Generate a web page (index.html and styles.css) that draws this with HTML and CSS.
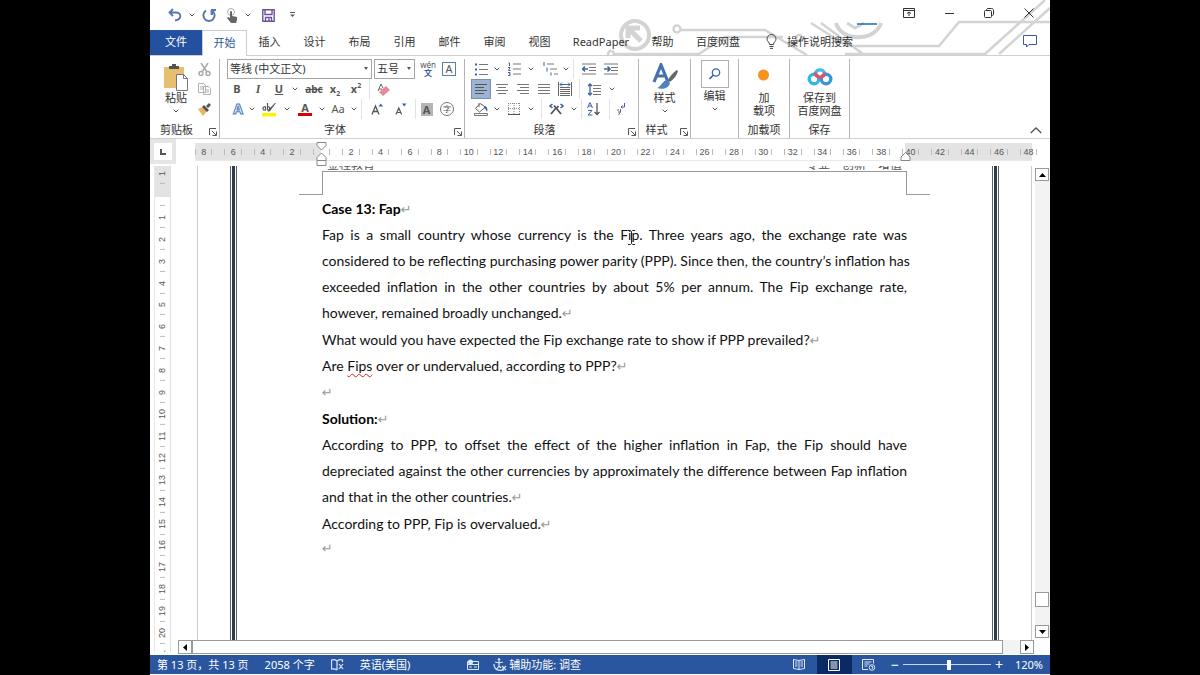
FILE: index.html
```
<!DOCTYPE html>
<html lang="zh-CN">
<head>
<meta charset="utf-8">
<title>Word</title>
<link rel="stylesheet" href="styles.css">
</head>
<body>
<svg class="defs" aria-hidden="true">
  <symbol id="chev" viewBox="0 0 6 4"><path d="M.7.7 3 3 5.300.7" fill="none" stroke="#555"/></symbol>
  <symbol id="launch" viewBox="0 0 8 8"><path d="M.5 7V.5H7M3 3l4 4M7.500 3.500v4h-4" fill="none" stroke="#555"/></symbol>
</svg>
<div class="app">
  <svg class="circuit" viewBox="0 0 450 56" fill="none" stroke="#d3d3d3" stroke-width="2.500" aria-hidden="true">
    <circle cx="35" cy="35" r="14" stroke-width="4"/>
    <path d="M41 41 30 30M28 38V28h12" stroke-width="5"/>
    <circle cx="77" cy="29" r="3.500"/>
    <path d="M81 30h84l30 18 12 7M165 37h18M108 48l-9 6H15M108 48l17-11h46M211 23l36 23h92l20-24h91M221 23l42 31h122l60-54M399 54 450 8M245 54h142"/>
    <circle cx="11" cy="54" r="3"/><circle cx="199" cy="38" r="3"/>
    <path d="M236 23c5 19 39 19 45 0" stroke-width="4"/>
    <path d="M247 23l8 5 9-5" stroke-width="3"/>
    <path d="M257 24h20" stroke="#1c6db0" stroke-width="1.500"/>
  </svg>
  <header class="titlebar">
    <div class="quick">
      <button class="tool w26" aria-label="撤消"><svg width="14" height="14" viewBox="0 0 14 14"><path d="M5 1 1.500 4.500 5 8M2 4.500h6c6 0 6 7-1 8" fill="none" stroke="#5674ae" stroke-width="1.800"/></svg></button>
      <button class="tool w8" aria-label="撤消选项"><svg width="6" height="4"><use href="#chev"/></svg></button>
      <button class="tool w26" aria-label="重复"><svg width="14" height="14" viewBox="0 0 14 14"><path d="M4 2.500C-1 6 2 13 7 13s8-7 3-10.500M10 7V2h4M9.500 6.500V2" fill="none" stroke="#5674ae" stroke-width="1.900"/></svg></button>
      <button class="tool w20" aria-label="触摸模式"><svg width="12" height="15" viewBox="0 0 12 15"><circle cx="5" cy="4" r="3.500" fill="none" stroke="#aaa"/><path d="M4 4c0-1.500 2-1.500 2 0v4l5 1v3l-1 3H5L1 10l1-1 2 1z" fill="#666"/></svg></button>
      <button class="tool w12" aria-label="触摸选项"><svg width="6" height="4"><use href="#chev"/></svg></button>
      <button class="tool w28" aria-label="保存"><svg width="13" height="13" viewBox="0 0 13 13"><path d="M.8.8h11.400v11.400H.8zM3 1v4.500h7V1M3.500 12V8.500h6V12M7 9.500V12" fill="none" stroke="#71509a" stroke-width="1.400"/></svg></button>
      <button class="tool w20" aria-label="自定义快速访问工具栏"><svg width="5" height="6" viewBox="0 0 5 6"><path d="M0 .5h5" stroke="#555"/><path d="M0 2.500h5L2.500 5z" fill="#555"/></svg></button>
    </div>
    <div class="winbtns">
      <button class="tool w40" aria-label="功能区显示选项"><svg width="12" height="10" viewBox="0 0 12 10"><path d="M.5.5h11v9H.5zM.5 2.500h11M6 8V4M4 5.500 6 4l2 1.500" fill="none" stroke="#333"/></svg></button>
      <button class="tool w40" aria-label="最小化"><svg width="9" height="9" viewBox="0 0 9 9"><path d="M0 4.500h9" stroke="#333"/></svg></button>
      <button class="tool w40" aria-label="还原"><svg width="10" height="10" viewBox="0 0 10 10"><rect x=".5" y="2.500" width="7" height="7" rx="1" fill="#fff" stroke="#333"/><path d="M2.500 2.500C2.500 1 3 .5 4 .5h3.500c1.500 0 2 1 2 2V6c0 1-.5 1.500-2 1.500" fill="none" stroke="#333"/></svg></button>
      <button class="tool w40" aria-label="关闭"><svg width="10" height="10" viewBox="0 0 10 10"><path d="M.5.5l9 9M9.500.5l-9 9" stroke="#333"/></svg></button>
    </div>
  </header>
  <nav class="tabs">
    <button class="file">文件</button>
    <button class="active">开始</button>
    <button>插入</button><button>设计</button><button>布局</button><button>引用</button><button>邮件</button><button>审阅</button><button>视图</button>
    <button class="wide">ReadPaper</button>
    <button>帮助</button>
    <button class="mid">百度网盘</button>
    <button class="tell"><svg width="11" height="15" viewBox="0 0 11 15"><path d="M3.500 10.500C3.500 8 1 7.500 1 5a4.500 4.500 0 0 1 9 0c0 2.500-2.500 3-2.500 5.500zM3.500 12.500h4M4 14.400h3" fill="none" stroke="#444"/></svg>操作说明搜索</button>
    <button class="comment" aria-label="批注"><svg width="14" height="13" viewBox="0 0 14 13"><path d="M.5.5h13v9H6L3.500 12V9.500h-3z" fill="#fff" stroke="#41569b"/></svg></button>
  </nav>

  <section class="ribbon">
    <div class="group clip">
      <div class="body clipbody">
        <button class="big"><svg width="26" height="28" viewBox="0 0 26 28"><path d="M1 4h20v21H1z" fill="#e8bf71"/><path d="M6 6V3h3V1h4v2h3v3z" fill="#555"/><path d="M13.500 11.500h7l4 4v12h-11z" fill="#fff" stroke="#777"/><path d="M20.500 11.500v4h4" fill="none" stroke="#777"/></svg>粘贴<svg class="under" width="6" height="4"><use href="#chev"/></svg></button>
        <div class="stack">
          <button class="tool" aria-label="剪切"><svg width="13" height="13" viewBox="0 0 13 13" fill="none" stroke="#a6a6a6" stroke-width="1.400"><path d="M3 0l6 9M10 0 4 9"/><circle cx="3" cy="10.500" r="2"/><circle cx="10" cy="10.500" r="2"/></svg></button>
          <button class="tool" aria-label="复制"><svg width="13" height="12" viewBox="0 0 13 12" fill="#fff" stroke="#b0b0b0"><path d="M.5.500h5l2 2v7h-7zM5.500 3.500h5l2 2v6h-7zM2 4h3M2 6h3M7 7h4M7 9h4"/></svg></button>
          <button class="tool" aria-label="格式刷"><svg width="14" height="13" viewBox="0 0 14 13"><path d="M1 6l5-2 4 4-4 5z" fill="#e9b565"/><path d="M5 4l2-2 5 5-2 2zM9 3l3-3 2 2-3 3z" fill="#555"/></svg></button>
        </div>
      </div>
      <div class="label">剪贴板<button aria-label="剪贴板设置"><svg width="8" height="8"><use href="#launch"/></svg></button></div>
    </div>

    <div class="group font">
      <div class="body">
        <div class="row">
          <span class="combo fontname"><select aria-label="字体"><option>等线 (中文正文)</option></select></span>
          <span class="combo fontsize"><select aria-label="字号"><option>五号</option></select></span>
          <button class="tool w26 pinyin" aria-label="拼音指南"><small>wén</small><b>文</b></button>
          <button class="tool w16" aria-label="字符边框"><span class="boxed">A</span></button>
        </div>
        <div class="row">
          <button class="tool w20"><b>B</b></button><button class="tool w22"><b><i class="serif">I</i></b></button><button class="tool w20"><b><u>U</u></b></button>
          <button class="tool w12" aria-label="下划线选项"><svg width="6" height="4"><use href="#chev"/></svg></button>
          <button class="tool w26"><b><s class="abc">abc</s></b></button><button class="tool w16"><b>x<sub>2</sub></b></button><button class="tool w26"><b>x<sup>2</sup></b></button>
          <button class="tool w28 split" aria-label="清除格式"><svg width="13" height="13" viewBox="0 0 13 13"><path d="M1 8 4 1l2 4M2 6h3" fill="none" stroke="#666"/><path d="M2 9l7-6 4 4-7 6z" fill="#e58a9b"/></svg></button>
        </div>
        <div class="row">
          <button class="tool w22"><b class="effect">A</b></button><button class="tool w6" aria-label="文本效果选项"><svg width="6" height="4"><use href="#chev"/></svg></button>
          <button class="tool w28" aria-label="突出显示"><svg width="15" height="15" viewBox="0 0 15 15"><path d="M0 11h14v3.500H0z" fill="#fff200"/><path d="M14 1 8 9l-2 1 1-3 6-6z" fill="#555"/><path d="M3.500 4.500v4M3.500 5c-3-1.500-3.500 3.500-.5 3M5.500 1v7.500M5.500 5c3-1.500 3 4 0 3" fill="none" stroke="#555" stroke-width="1.200"/></svg></button><button class="tool w8" aria-label="突出显示选项"><svg width="6" height="4"><use href="#chev"/></svg></button>
          <button class="tool w28"><b class="redbar">A</b></button><button class="tool w6" aria-label="字体颜色选项"><svg width="6" height="4"><use href="#chev"/></svg></button>
          <button class="tool w26">Aa</button><button class="tool w6" aria-label="大小写选项"><svg width="6" height="4"><use href="#chev"/></svg></button>
          <button class="tool w34 line" aria-label="增大字号"><svg width="12" height="12" viewBox="0 0 12 12"><path d="M1 11.500 4.500 3 8 11.500M2.500 8.500h4" fill="none" stroke="#555" stroke-width="1.300"/><path d="M7.500 3.500h4.500L9.700.5z" fill="#3c61a8"/></svg></button><button class="tool w20" aria-label="减小字号"><svg width="12" height="12" viewBox="0 0 12 12"><path d="M1 11.500 3.800 5l2.800 6.500M2.500 9.500h3" fill="none" stroke="#555" stroke-width="1.200"/><path d="M7 .5h4.500L9.200 3.500z" fill="#3c61a8"/></svg></button>
          <button class="tool w26 line" aria-label="字符底纹"><b class="shade">A</b></button><button class="tool w20" aria-label="带圈字符"><span class="ring">字</span></button>
        </div>
      </div>
      <div class="label">字体<button aria-label="字体设置"><svg width="8" height="8"><use href="#launch"/></svg></button></div>
    </div>

    <div class="group para">
      <div class="body">
        <div class="row">
          <button class="tool w20" aria-label="项目符号"><svg width="13" height="13" viewBox="0 0 13 13"><path d="M4 1.500h9M4 6.500h9M4 11.500h9" stroke="#777"/><path d="M0 1.500h2M0 6.500h2M0 11.500h2" stroke="#3c61a8" stroke-width="2"/></svg></button><button class="tool w12" aria-label="项目符号选项"><svg width="6" height="4"><use href="#chev"/></svg></button>
          <button class="tool w22" aria-label="编号"><svg width="13" height="14" viewBox="0 0 13 14"><path d="M5 2h8M5 7h8M5 12h8" stroke="#777"/><path d="M.5 1h1v3M0 5.500h2L.5 8.500h2M0 10.500h2v3H0M1 12h1" fill="none" stroke="#3c61a8"/></svg></button><button class="tool w12" aria-label="编号选项"><svg width="6" height="4"><use href="#chev"/></svg></button>
          <button class="tool w26" aria-label="多级列表"><svg width="15" height="14" viewBox="0 0 15 14"><path d="M4 2h7M7 7h7M11 12h4" stroke="#777"/><path d="M1 0v4M4 5.500v4M8 10.500v3" stroke="#3c61a8"/></svg></button><button class="tool w6" aria-label="多级列表选项"><svg width="6" height="4"><use href="#chev"/></svg></button>
          <button class="tool w34 line" aria-label="减少缩进"><svg width="14" height="12" viewBox="0 0 14 12"><path d="M0 1h14M7 4.500h7M7 7.500h7M0 11h14" stroke="#777"/><path d="M6 6H1M3 3.500.5 6 3 8.500" fill="none" stroke="#3c61a8" stroke-width="1.500"/></svg></button>
          <button class="tool w16" aria-label="增加缩进"><svg width="14" height="12" viewBox="0 0 14 12"><path d="M0 1h14M7 4.500h7M7 7.500h7M0 11h14" stroke="#777"/><path d="M0 6h5M3.500 3.500 6 6 3.500 8.500" fill="none" stroke="#3c61a8" stroke-width="1.500"/></svg></button>
        </div>
        <div class="row">
          <button class="tool w20 on" aria-label="左对齐"><svg width="12" height="12" viewBox="0 0 12 12" stroke="#555"><path d="M0 1.500h12M0 4.500h9M0 7.500h12M0 10.500h9"/></svg></button>
          <button class="tool w22" aria-label="居中"><svg width="12" height="12" viewBox="0 0 12 12" stroke="#777"><path d="M0 1.500h12M2 4.500h8M0 7.500h12M2 10.500h8"/></svg></button>
          <button class="tool w20" aria-label="右对齐"><svg width="12" height="12" viewBox="0 0 12 12" stroke="#777"><path d="M0 1.500h12M3 4.500h9M0 7.500h12M3 10.500h9"/></svg></button>
          <button class="tool w22" aria-label="两端对齐"><svg width="12" height="12" viewBox="0 0 12 12" stroke="#777"><path d="M0 1.500h12M0 4.500h12M0 7.500h12M0 10.500h12"/></svg></button>
          <button class="tool w20" aria-label="分散对齐"><svg width="14" height="14" viewBox="0 0 14 14"><path d="M.5 0v14M13.500 0v14M2 5.500h10M2 7.500h10M2 9.500h10M2 11.500h10M2 13.500h10" stroke="#666"/><path d="M2 2.500h10M4 .5 2 2.500l2 2M10 .5l2 2-2 2" fill="none" stroke="#3c61a8"/></svg></button>
          <button class="tool w34 line" aria-label="行距"><svg width="13" height="13" viewBox="0 0 13 13"><path d="M5 2.500h8M5 5.500h8M5 8.500h8M5 11.500h8" stroke="#777"/><path d="M2 1v11M0 3l2-2 2 2M0 10l2 2 2-2" fill="none" stroke="#3c61a8" stroke-width="1.300"/></svg></button><button class="tool w6" aria-label="行距选项"><svg width="6" height="4"><use href="#chev"/></svg></button>
        </div>
        <div class="row">
          <button class="tool w20" aria-label="底纹"><svg width="15" height="14" viewBox="0 0 15 14"><path d="M6 1.500 1.500 6.500l4 3.500 6-5zM5 5V1" fill="#fff" stroke="#666"/><path d="M10 4c3 0 4 3 3 6-1-2-1-3-3-4z" fill="#3c61a8"/><path d="M.5 11.500h13v2H.5z" fill="#fff" stroke="#777"/></svg></button><button class="tool w12" aria-label="底纹选项"><svg width="6" height="4"><use href="#chev"/></svg></button>
          <button class="tool w22" aria-label="边框"><svg width="12" height="12" viewBox="0 0 12 12"><path d="M.5 0v11M6 0v11M11.500 0v11M0 .5h12M0 5.500h12" stroke="#888" stroke-dasharray="1 1"/><path d="M0 11.500h12" stroke="#555"/></svg></button><button class="tool w12" aria-label="边框选项"><svg width="6" height="4"><use href="#chev"/></svg></button>
          <button class="tool w34 line" aria-label="中文版式"><svg width="15" height="12" viewBox="0 0 15 12"><path d="M2 11 7 5M5 2.500 12 11M9.500 3 7 6" fill="none" stroke="#555" stroke-width="1.800"/><path d="M3.500 1 1 3l2.500 2M11.500 1 14 3l-2.500 2" fill="none" stroke="#3c61a8" stroke-width="1.600"/></svg></button><button class="tool w6" aria-label="中文版式选项"><svg width="6" height="4"><use href="#chev"/></svg></button>
          <button class="tool w28 line" aria-label="排序"><svg width="13" height="14" viewBox="0 0 13 14" fill="none"><path d="M.5 6 3 .5 5.500 6M1.500 4h3M1 8.500h4L1 13h4.500" stroke="#3c61a8"/><path d="M10 1v11M7.500 10l2.500 2.500 2.500-2.500" stroke="#555" stroke-width="1.300"/></svg></button>
          <button class="tool w26 line" aria-label="显示编辑标记"><svg width="9" height="13" viewBox="0 0 9 13"><path d="M7.500 0v4H4M5.500 2.500 4 4l1.500 1.500" fill="none" stroke="#3c61a8"/><path d="M3.500 6v3l-2 3M2 7H0M3 9 1 9" fill="none" stroke="#666"/></svg></button>
        </div>
      </div>
      <div class="label">段落<button aria-label="段落设置"><svg width="8" height="8"><use href="#launch"/></svg></button></div>
    </div>

    <div class="group styles">
      <div class="body"><button class="big"><svg width="26" height="28" viewBox="0 0 26 28"><path d="M2 19 9 2l7 17M5 13h8" fill="none" stroke="#4472b0" stroke-width="3.200"/><path d="M25 7c-3 2-7 6-9 10l2 2c4-3 7-7 8-11z" fill="#666"/><path d="M15 17l3 3c-1 5-7 7-13 5 4-1 5-7 10-8z" fill="#4e82bd"/></svg>样式<svg class="under" width="6" height="4"><use href="#chev"/></svg></button></div>
      <div class="label">样式<button aria-label="样式设置"><svg width="8" height="8"><use href="#launch"/></svg></button></div>
    </div>
    <div class="group edit">
      <div class="body"><button class="big"><span class="find"><svg width="12" height="12" viewBox="0 0 12 12"><circle cx="7" cy="4.500" r="3.700" fill="none" stroke="#3c61a8" stroke-width="1.300"/><path d="M4.500 7 .5 11" stroke="#3c61a8" stroke-width="1.600"/></svg></span>编辑<svg class="under" width="6" height="4"><use href="#chev"/></svg></button></div>
      <div class="label"></div>
    </div>
    <div class="group addin">
      <div class="body"><button class="big"><svg width="26" height="28" viewBox="0 0 26 28"><circle cx="12.500" cy="12" r="5.500" fill="#f7921e"/></svg>加<br>载项</button></div>
      <div class="label">加载项</div>
    </div>
    <div class="group save">
      <div class="body"><button class="big"><svg width="26" height="28" viewBox="0 0 26 28" fill="none" stroke-width="3.400"><path d="M8.500 10a4.800 4.800 0 0 1 9 0" stroke="#48bfe1"/><circle cx="7" cy="16" r="4.800" stroke="#35b5e8"/><circle cx="19" cy="16" r="4.800" stroke="#3299dc"/><path d="M17.700 9.500a4.600 4.600 0 0 1-9.400 0" stroke="#e25268"/></svg>保存到<br>百度网盘</button></div>
      <div class="label">保存</div>
    </div>
    <button class="collapse" aria-label="折叠功能区"><svg width="12" height="7" viewBox="0 0 12 7"><path d="M.7 6 6 1l5.300 5" fill="none" stroke="#555" stroke-width="1.300"/></svg></button>
  </section>

  <div class="rulerbar">
    <button class="corner" aria-label="制表符"><svg width="7" height="6" viewBox="0 0 7 6"><path d="M1 0v5h5" fill="none" stroke="#555" stroke-width="2"/></svg></button>
    <div class="hruler">
      <div class="hscale">
        <i>8</i><i>6</i><i>4</i><i>2</i><i></i><i>2</i><i>4</i><i>6</i><i>8</i><i>10</i><i>12</i><i>14</i><i>16</i><i>18</i><i>20</i><i>22</i><i>24</i><i>26</i><i>28</i><i>30</i><i>32</i><i>34</i><i>36</i><i>38</i><i>40</i><i>42</i><i>44</i><i>46</i><i>48</i>
      </div>
      <svg class="indent" width="11" height="24" viewBox="0 0 11 24"><path d="M1 .5h9v3L5.500 8 1 3.500zM5.500 11 10 15.500v3H1v-3zM1 18.500h9v5H1z" fill="#fff" stroke="#888"/></svg>
      <svg class="rindent" width="11" height="9" viewBox="0 0 11 9"><path d="M5.500.5 10 5v3.500H1V5z" fill="#fff" stroke="#888"/></svg>
    </div>
  </div>

  <main class="work">
    <div class="vruler"><div class="vscale">
      <i>1</i><i></i><i>1</i><i>2</i><i>3</i><i>4</i><i>5</i><i>6</i><i>7</i><i>8</i><i>9</i><i>10</i><i>11</i><i>12</i><i>13</i><i>14</i><i>15</i><i>16</i><i>17</i><i>18</i><i>19</i><i>20</i><i>21</i>
    </div></div>
    <div class="pane">
      <div class="view">
        <div class="page">
          <div class="rule"></div>
          <article class="sheet">
            <div class="head"><span>金程教育</span><span>专业·创新·增值</span></div>
            <div class="marks"></div>
            <h2>Case 13: Fap<em>↵</em></h2>
            <p class="long"><span>Fap is a small country whose currency is the Fip. Three years ago, the exchange rate was</span> <span>considered to be reflecting purchasing power parity (PPP). Since then, the country’s inflation has</span> <span>exceeded inflation in the other countries by about 5% per annum. The Fip exchange rate,</span> however, remained broadly unchanged.<em>↵</em></p>
            <p>What would you have expected the Fip exchange rate to show if PPP prevailed?<em>↵</em></p>
            <p>Are <u class="typo">Fips</u> over or undervalued, according to PPP?<em>↵</em></p>
            <p><em>↵</em></p>
            <h2>Solution:<em>↵</em></h2>
            <p class="long"><span>According to PPP, to offset the effect of the higher inflation in Fap, the Fip should have</span> <span>depreciated against the other currencies by approximately the difference between Fap inflation</span> and that in the other countries.<em>↵</em></p>
            <p>According to PPP, Fip is overvalued.<em>↵</em></p>
            <p class="last"><em>↵</em></p>
            <svg class="ibeam" width="7" height="15" viewBox="0 0 7 15"><path d="M0 .5h2.500l1 1 1-1H7M3.500 1.500v12M0 14.500h2.500l1-1 1 1H7" fill="none" stroke="#222"/></svg>
          </article>
          <div class="rule"></div>
        </div>
        <div class="vbar">
          <button aria-label="向上滚动"><svg width="7" height="4" viewBox="0 0 7 4"><path d="M0 4h7L3.500 0z"/></svg></button>
          <div class="track"><div class="thumb"></div></div>
          <button aria-label="向下滚动"><svg width="7" height="4" viewBox="0 0 7 4"><path d="M0 0h7L3.500 4z"/></svg></button>
        </div>
      </div>
      <div class="hbar">
        <button aria-label="向左滚动"><svg width="4" height="7" viewBox="0 0 4 7"><path d="M4 0v7L0 3.500z"/></svg></button>
        <div class="hthumb"></div>
        <button aria-label="向右滚动"><svg width="4" height="7" viewBox="0 0 4 7"><path d="M0 0v7l4-3.500z"/></svg></button>
      </div>
    </div>
  </main>

  <footer class="status">
    <span>第 13 页，共 13 页</span>
    <span>2058 个字</span>
    <svg width="13" height="12" viewBox="0 0 13 12"><path d="M6 1.500v9.500M6 2C4 .5 2 .5.500 1v9c2-.5 4 0 5.500 1M6 2c2-1.500 4-1.500 5.500-1v2M8 5l4 5M12 5l-4 5" fill="none" stroke="#dfe8f7" stroke-width="1.200"/></svg>
    <span>英语(美国)</span>
    <svg class="rec" width="12" height="11" viewBox="0 0 12 11"><path d="M.5 10.500v-8h11v8zM.5 5.500h11M2 8h3M7 8h3" fill="none" stroke="#dfe8f7"/><circle cx="3.500" cy="3" r="2.500" fill="#dfe8f7"/></svg>
    <span class="access"><svg width="14" height="13" viewBox="0 0 14 13"><path d="M6 3v6M2 4l4 1 4-1M6 8l-3 4M6 8l2 2M11 12C6 13 1 12 1 6M9 8l4 4M13 8l-4 4" fill="none" stroke="#dfe8f7" stroke-width="1.200"/><circle cx="6" cy="1.500" r="1.300" fill="#dfe8f7"/></svg>辅助功能: 调查</span>
    <span class="grow"></span>
    <button class="vw" aria-label="阅读视图"><svg width="12" height="11" viewBox="0 0 12 11"><path d="M6 1.500v9M6 1.500 .5.500v9l5.500 1 5.500-1v-9zM2 3h2.500M2 5h2.500M2 7h2.500M7.500 3H10M7.500 5H10M7.500 7H10" fill="none" stroke="#dfe8f7"/></svg></button>
    <button class="vw cur" aria-label="页面视图"><svg width="12" height="12" viewBox="0 0 12 12"><path d="M.5.5h11v11H.5zM2.500 3h7M2.500 5h7M2.500 7h7M2.500 9h7" fill="none" stroke="#fff"/></svg></button>
    <button class="vw" aria-label="Web 版式"><svg width="14" height="12" viewBox="0 0 14 12"><path d="M6 10.500H.5V.5h11v4M2.500 3h7M2.500 5h5M2.500 7h3" fill="none" stroke="#dfe8f7"/><circle cx="10" cy="8.500" r="2.800" fill="#2b579a" stroke="#dfe8f7"/><path d="M9 7l2 1-1 2" stroke="#dfe8f7" fill="none"/></svg></button>
    <button class="zoombtn" aria-label="缩小">−</button>
    <input class="slider" type="range" min="0" max="200" value="105" aria-label="显示比例">
    <button class="zoombtn" aria-label="放大">+</button>
    <span class="pct">120%</span>
  </footer>
</div>
</body>
</html>
```
FILE: styles.css
```
* { box-sizing: border-box; }
body {
  margin: 0;
  background: #000;
  color: #333;
  font: 11px/14px "Noto Sans", "Noto Sans CJK SC", sans-serif;
}
button {
  border: 0;
  padding: 0;
  background: none;
  color: inherit;
  font: inherit;
}
svg { display: block; flex: none; }
.defs { position: absolute; width: 0; height: 0; }
.app {
  position: relative;
  display: flex;
  flex-direction: column;
  width: 75%;
  height: 100vh;
  margin: 0 auto;
  background: #fff;
  padding-bottom: 1px;
  overflow: hidden;
}
.circuit { position: absolute; top: 0; right: 0; width: 450px; height: 56px; }

.tool { display: inline-flex; align-items: center; justify-content: center; height: 20px; flex: none; }
.w6 { width: 6px; } .w8 { width: 8px; } .w12 { width: 12px; } .w16 { width: 16px; }
.w20 { width: 20px; } .w22 { width: 22px; } .w26 { width: 26px; } .w28 { width: 28px; }
.w34 { width: 34px; } .w40 { width: 40px; }

.titlebar { position: relative; display: flex; justify-content: space-between; height: 30px; flex: none; }
.quick { display: flex; align-items: center; padding-left: 12px; }
.winbtns { display: flex; align-items: center; height: 26px; padding-right: 1px; }

.tabs { position: relative; display: flex; height: 26px; flex: none; border-bottom: 1px solid #cfcfcf; }
.tabs button { width: 45px; height: 25px; padding-bottom: 2px; }
.tabs .file { width: 52px; background: #2450a0; color: #fff; }
.tabs .active { height: 26px; border: 1px solid #c8ccd4; border-bottom: 0; background: #fff; color: #2b579a; }
.tabs .wide { width: 78px; }
.tabs .mid { width: 66px; }
.tabs .tell { display: flex; align-items: center; gap: 10px; width: auto; padding-left: 15px; }
.tabs .comment { display: flex; align-items: center; justify-content: center; width: 40px; margin-left: auto; }

.ribbon { display: flex; height: 83px; flex: none; border-bottom: 1px solid #cfcfcf; padding-top: 3px; }
.group { display: flex; flex-direction: column; justify-content: space-between; border-right: 1px solid #b4b4b4; }
.clip { width: 70px; } .font { width: 245px; } .para { width: 174px; }
.styles { width: 52px; } .edit { width: 48px; } .addin { width: 51px; } .save { width: 60px; }
.label { position: relative; height: 16px; line-height: 16px; text-align: center; }
.clip .label, .styles .label { padding-right: 16px; }
.font .label, .para .label { padding-right: 14px; }
.label button { position: absolute; right: 2px; bottom: 2px; }
.body { display: flex; flex-direction: column; }
.row { display: flex; height: 20px; padding-left: 7px; align-items: center; }
.para .row { padding-left: 6px; }
.clipbody { flex-direction: row; }
.stack { display: flex; flex-direction: column; margin-left: -5px; }
.big { display: flex; flex-direction: column; align-items: center; width: 100%; line-height: 13px; padding-top: 4px; }
.clipbody .big { width: 52px; }
.under { margin-top: 5px; }
.find { display: grid; place-items: center; width: 28px; height: 28px; border: 1px solid #b0b0b0; margin: -3px 0 1px; }

.combo { position: relative; height: 20px; flex: none; }
.combo::after {
  content: "";
  position: absolute;
  right: 4px;
  top: 8px;
  border: 2px solid transparent;
  border-top: 3px solid #555;
}
.combo select {
  appearance: none;
  display: block;
  width: 100%;
  height: 20px;
  padding: 0 2px;
  border: 1px solid #a5a5a5;
  border-radius: 0;
  background: #fff;
  color: #333;
  font: inherit;
}
.fontname { width: 145px; }
.fontsize { width: 41px; margin-left: 2px; }
.font .tool { color: #555; }
.pinyin { flex-direction: column; }
.pinyin small { font-size: 8px; line-height: 7px; }
.pinyin b { font-size: 8px; line-height: 9px; color: #3c61a8; }
.boxed { width: 14px; height: 14px; border: 1px solid #5f7ba8; line-height: 12px; }
.serif { font-family: "Liberation Serif", serif; font-size: 12px; }
.abc { font-size: 10px; }
sub, sup { font-size: 7px; line-height: 0; }
.effect { color: #fff; font-size: 14px; -webkit-text-stroke: 1px #4a7ab8; }
.redbar { width: 14px; height: 14px; line-height: 11px; border-bottom: 3px solid #d40000; }
.shade { width: 12px; height: 13px; line-height: 13px; background: #b5b5b5; }
.ring { width: 14px; height: 14px; border: 1px solid #777; border-radius: 50%; font-size: 8px; line-height: 12px; }
.split { border-left: 1px solid #e2e2e2; }
.line { border-left: 1px solid #e2e2e2; margin-left: 4px; }
.w34.line { width: 30px; }
.font .w26.line { width: 22px; }
.para .w26.line, .para .w28.line { width: 24px; }
.on { background: #9db3d3; border: 1px solid #7890b5; }
.collapse { margin: auto 8px 4px auto; }

.rulerbar { display: flex; height: 27px; flex: none; }
.corner { display: grid; place-items: center; width: 26px; height: 25px; border: 4px solid #e5e5e5; }
.hruler {
  position: relative;
  flex: 1;
  height: 18px;
  margin: 4px 18px 0 19px;
  background: linear-gradient(90deg, #e3e3e3 15.1%, #fff 15.1% 84.8%, #e3e3e3 84.8%);
  border-bottom: 1px solid #e8e8e8;
}
.hscale { display: flex; margin: 0 -11px 0 -6px; height: 18px; }
.hscale i {
  flex: 1 1 0;
  display: flex;
  align-items: center;
  justify-content: space-between;
  padding: 0 7px;
  font: 9px/12px "Liberation Sans", sans-serif;
  color: #555;
}
.hscale i::before, .hscale i::after { content: ""; width: 1px; height: 6px; background: #bbb; margin: 0 -1px; }
.indent { position: absolute; left: calc(15.1% - 5px); top: -1px; }
.rindent { position: absolute; left: calc(84.8% - 5px); top: 9px; }

.work { display: flex; flex: 1; min-height: 0; }
.vruler {
  display: flex;
  width: 17px;
  margin: 0 11px 3px 4px;
  overflow: hidden;
  background: linear-gradient(#e3e3e3 31px, #fff 31px);
  border-right: 1px solid #e0e0e0;
  border-left: 1px solid #e8e8e8;
}
.vscale { display: flex; flex-direction: column; width: 100%; margin: -4px 0 -14px; }
.vscale i {
  flex: 1 1 0;
  min-height: 0;
  writing-mode: vertical-rl;
  transform: rotate(180deg);
  text-align: center;
  font: 9px/15px "Liberation Sans", sans-serif;
  color: #555;
  background: linear-gradient(#bbb, #bbb) center top / 5px 1px no-repeat;
}
.pane { display: flex; flex-direction: column; flex: 1; min-width: 0; }
.view { display: flex; flex: 1; min-height: 0; padding-left: 15px; }
.page {
  display: flex;
  flex: 1;
  min-width: 0;
  margin-right: 3px;
  padding: 0 32px;
  border-left: 1px solid #ccc;
  border-right: 1px solid #ccc;
}
.rule {
  width: 7px;
  flex: none;
  background: linear-gradient(90deg, #53616f 1px, #fff 1px 2px, #2f3c48 2px 5px, #fff 5px 6px, #53616f 6px);
}
.sheet {
  position: relative;
  flex: 1;
  min-width: 0;
  padding: 0 85px;
  color: #111;
  font: 14px/26px Lato, "Noto Sans", sans-serif;
}
.head {
  display: flex;
  justify-content: space-between;
  align-items: flex-end;
  height: 5px;
  padding: 0 5px;
  overflow: hidden;
  font: 12px/14px "Noto Sans CJK SC", sans-serif;
  color: #555;
}
.marks { position: relative; height: 24px; border: 1px solid #999; border-bottom: 0; }
.marks::before, .marks::after { content: ""; position: absolute; bottom: 0; width: 24px; height: 1px; background: #999; }
.marks::before { right: 100%; }
.marks::after { left: 100%; }
.sheet h2 { margin: 1px 0 0; font-size: 14px; line-height: 26px; color: #000; }
.sheet p { margin: 0; white-space: nowrap; }
.sheet .long { margin-bottom: 1px; }
.long span { display: block; text-align: justify; text-align-last: justify; }
.sheet em { font: 13px/1 "DejaVu Sans", sans-serif; color: #999; }
.sheet .last { line-height: 22px; }
.typo { text-decoration: underline wavy #d22 1px; text-underline-offset: 2px; }
.ibeam { position: absolute; left: 391px; top: 64px; }

.vbar { display: flex; flex-direction: column; width: 15px; margin: 2px 0; padding-right: 1px; background: #f3f3f3; }
.vbar button, .hbar button { display: grid; place-items: center; width: 14px; height: 13px; border: 1px solid #999; background: #fff; flex: none; }
.track { flex: 1; display: flex; flex-direction: column; justify-content: flex-end; padding-bottom: 18px; }
.thumb { height: 15px; border: 1px solid #999; background: #fff; }
.hbar { display: flex; height: 14px; margin: 0 16px 1px 0; flex: none; background: #f3f3f3; }
.hthumb { flex: 1; margin-right: 17px; border: 1px solid #999; background: #fff; }
.hbar button { height: 14px; }
.view + .hbar { margin-left: -4px; }

.status { display: flex; align-items: center; height: 19px; flex: none; background: #2a569f; color: #fff; padding: 0 7px; white-space: nowrap; }
.status > span { margin-right: 16px; }
.status > svg { margin-right: 16px; }
.status .rec { margin: 0 14px 0 41px; }
.access { display: flex; align-items: center; gap: 2px; }
.grow { flex: 1; }
.vw { display: grid; place-items: center; width: 35px; height: 19px; }
.cur { background: #0a2a63; }
.zoombtn { width: 16px; font-size: 14px; line-height: 19px; }
.slider { appearance: none; width: 88px; height: 12px; margin: 0; background: linear-gradient(#c9d8ee, #c9d8ee) center / 100% 1px no-repeat; }
.slider::-webkit-slider-thumb { appearance: none; width: 4px; height: 10px; background: #fff; }
.status .pct { margin: 0 0 0 8px; }
```
